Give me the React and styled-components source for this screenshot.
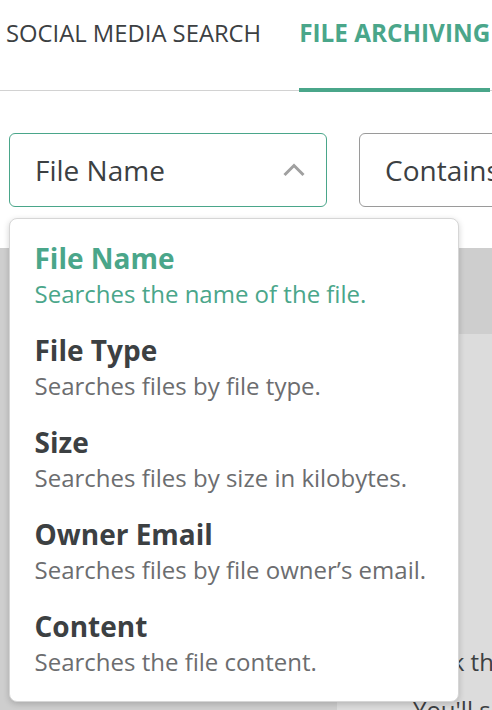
import React from "react";
import styled, { createGlobalStyle } from "styled-components";

const GlobalStyle = createGlobalStyle`
  html, body {
    margin: 0;
    padding: 0;
    background: #ffffff;
    overflow: hidden;
  }
  body {
    font-family: "Open Sans", "Noto Sans", sans-serif;
    color: #3c4042;
  }
`;

const Page = styled.div`
  position: relative;
  width: 492px;
  height: 710px;
  overflow: hidden;
`;

const TabBar = styled.div`
  display: flex;
  gap: 38px;
  height: 91px;
  padding-left: 6px;
  border-bottom: 1px solid #d2d2d2;
  box-sizing: border-box;
  white-space: nowrap;
`;

const Tab = styled.div`
  height: 92px;
  box-sizing: border-box;
  padding-top: ${(p) => (p.$active ? 16 : 17)}px;
  font-size: ${(p) => (p.$active ? 24.3 : 23.8)}px;
  font-weight: ${(p) => (p.$active ? 700 : 400)};
  color: ${(p) => (p.$active ? "#4aa68a" : "#3c4042")};
  box-shadow: ${(p) => (p.$active ? "inset 0 -4px 0 #4aa68a" : "none")};
`;

const FilterRow = styled.div`
  display: flex;
  gap: 32px;
  padding: 42px 0 0 9px;
  white-space: nowrap;
`;

const SelectBox = styled.div`
  position: relative;
  flex: 0 0 ${(p) => p.$width}px;
  height: 74px;
  box-sizing: border-box;
  display: flex;
  align-items: center;
  justify-content: space-between;
  padding: 0 20px 0 25px;
  border: 1.5px solid ${(p) => (p.$open ? "#4aa68a" : "#9a9a9a")};
  border-radius: 6px;
  font-size: 28px;
  color: #3c4042;
`;

const Chevron = styled.svg`
  width: 24px;
  height: 15px;
  margin-bottom: 2px;
`;

const Menu = styled.div`
  position: absolute;
  top: 84px;
  left: -1.5px;
  width: 450px;
  height: 484px;
  box-sizing: border-box;
  padding: 21px 0 0 25px;
  background: #ffffff;
  border: 1px solid #d6d6d6;
  border-radius: 8px;
  box-shadow: 0 2px 6px rgba(0, 0, 0, 0.18);
  z-index: 5;
  display: flex;
  flex-direction: column;
  gap: 21px;
`;

const Option = styled.div`
  display: flex;
  flex-direction: column;
  color: ${(p) => (p.$selected ? "#4aa68a" : "#3c4042")};
`;

const OptionTitle = styled.div`
  font-size: 28px;
  font-weight: 700;
  line-height: 36px;
`;

const OptionDesc = styled.div`
  font-size: 24px;
  line-height: 35px;
  color: ${(p) => (p.$selected ? "#4aa68a" : "#6c6d6f")};
`;

const Backdrop = styled.div`
  margin-top: 41px;
  height: 500px;
  background: #cecece;
  display: flex;
  flex-direction: column;
`;

const BackHeader = styled.div`
  flex: 0 0 86px;
`;

const BackCard = styled.div`
  flex: 1;
  margin-left: 337px;
  background: #dcdcdc;
  padding: 304px 0 0 76px;
  box-sizing: border-box;
  font-size: 24px;
  line-height: 48px;
  color: #3c4042;
  white-space: nowrap;
`;

const options = [
  { title: "File Name", desc: "Searches the name of the file.", selected: true },
  { title: "File Type", desc: "Searches files by file type." },
  { title: "Size", desc: "Searches files by size in kilobytes." },
  { title: "Owner Email", desc: "Searches files by file owner\u2019s email." },
  { title: "Content", desc: "Searches the file content." },
];

export default function App() {
  return (
    <Page>
      <GlobalStyle />
      <TabBar>
        <Tab>SOCIAL MEDIA SEARCH</Tab>
        <Tab $active>FILE ARCHIVING</Tab>
      </TabBar>
      <FilterRow>
        <SelectBox $width={318} $open>
          File Name
          <Chevron viewBox="0 0 24 15">
            <path d="M2.5 13 L12 3.5 L21.5 13" fill="none" stroke="#a0a0a0" strokeWidth="3" />
          </Chevron>
          <Menu>
            {options.map((o) => (
              <Option key={o.title} $selected={o.selected}>
                <OptionTitle>{o.title}</OptionTitle>
                <OptionDesc $selected={o.selected}>{o.desc}</OptionDesc>
              </Option>
            ))}
          </Menu>
        </SelectBox>
        <SelectBox $width={300}>Contains</SelectBox>
      </FilterRow>
      <Backdrop>
        <BackHeader />
        <BackCard>
          Click the filter
          <br />
          You'll see results
        </BackCard>
      </Backdrop>
    </Page>
  );
}
